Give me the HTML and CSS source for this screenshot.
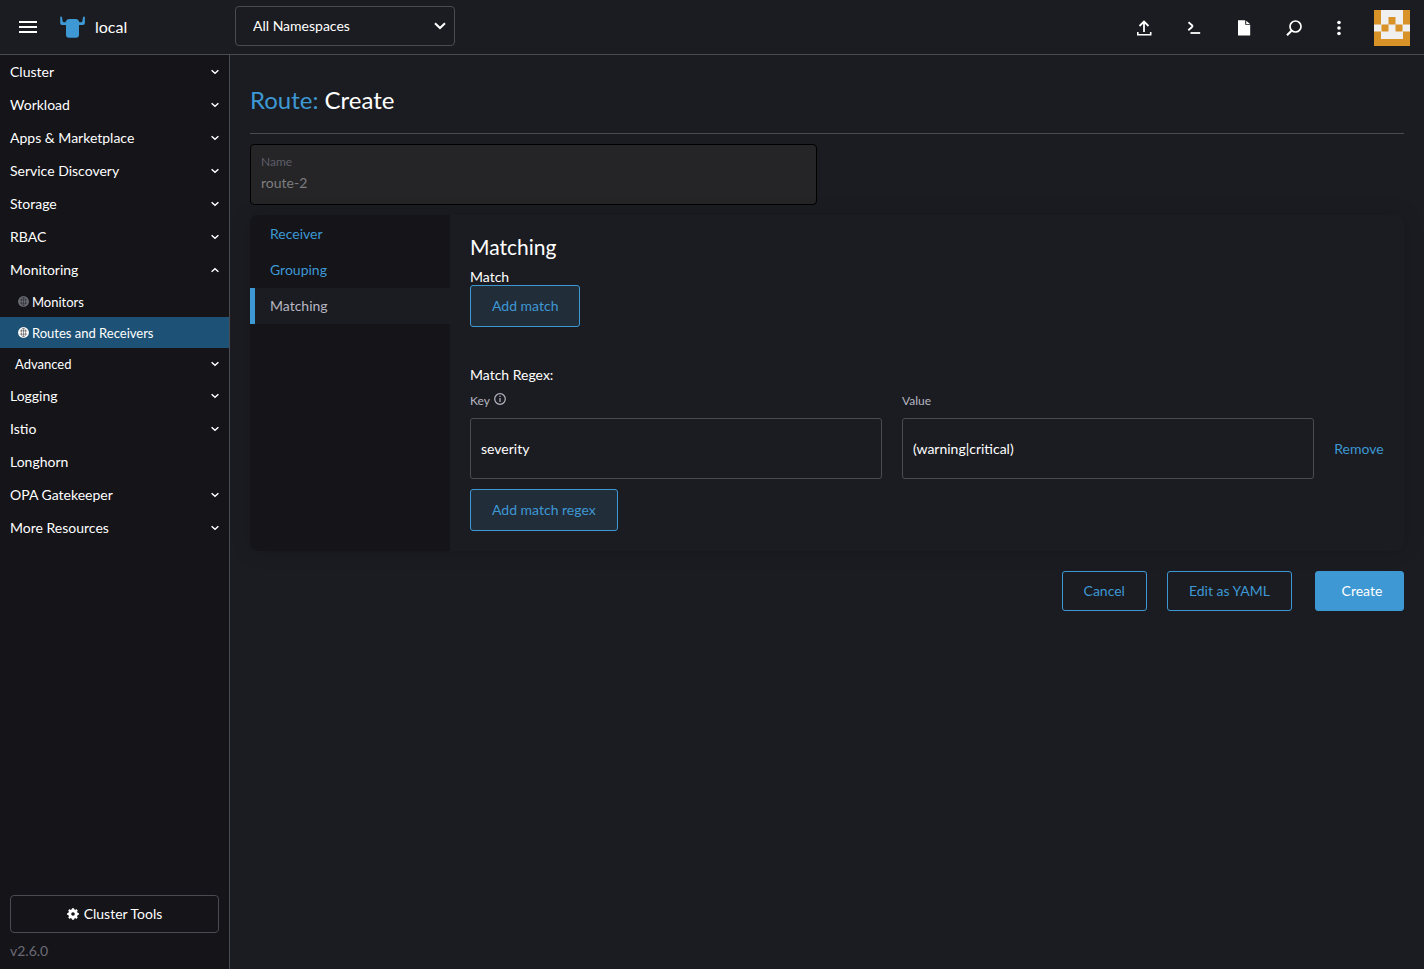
FILE: index.html
```html
<!DOCTYPE html>
<html lang="en">
<head>
<meta charset="utf-8">
<title>Route: Create</title>
<link rel="stylesheet" href="styles.css">
</head>
<body>
<svg class="defs" aria-hidden="true">
  <symbol id="chevron" viewBox="0 0 8 6"><path d="M.6 1.200 4 4.200 7.400 1.200" fill="none" stroke="currentColor" stroke-width="1.500"/></symbol>
  <symbol id="globe" viewBox="0 0 12 12"><circle cx="6" cy="6" r="5.900" fill="currentColor"/><g fill="none" stroke="#141419" stroke-opacity=".7" stroke-width=".7"><path d="M6 1.500v9M2 4.200h8M2 7.800h8"/><ellipse cx="6" cy="6" rx="2.400" ry="4.600"/></g></symbol>
</svg>
<div class="app">
  <header class="topbar">
    <div class="brand">
      <button class="icon-btn menu" aria-label="Menu"><svg width="18" height="12" viewBox="0 0 18 12"><path d="M0 1h18M0 6h18M0 11h18" stroke="currentColor" stroke-width="2"/></svg></button>
      <svg class="logo" width="26" height="22" viewBox="0 0 26 22"><path fill="#3d98d3" d="M1.200.5C.5.5.2 1 .2 1.700V7Q.2 9 2 9H6V18.500Q6 21.800 9 21.800H16Q19 21.800 19 18.500V9H23Q24.900 9 24.900 7V1.700C24.900 1 24.600.5 23.900.5 22.900.5 22.900 2 22.600 4 22.400 6 21.800 6.300 19.800 6.300 19 6.300 18.800 3 16 3H9C6.200 3 6 6.300 5.200 6.300 3.200 6.300 2.600 6 2.400 4 2.200 2 2.200.5 1.200.5Z"/></svg>
      <span class="cluster-name">local</span>
    </div>
    <div class="namespace">
      <select aria-label="Namespaces"><option>All Namespaces</option></select>
      <svg class="select-arrow" width="12" height="8" viewBox="0 0 12 8"><path d="M1 1.200 6 6 11 1.200" fill="none" stroke="currentColor" stroke-width="2"/></svg>
    </div>
    <div class="actions">
      <button class="icon-btn" aria-label="Import YAML"><svg width="16" height="16" viewBox="0 0 16 16" fill="none" stroke="currentColor" stroke-width="1.800"><path d="M8 12V1.800M3.500 6 8 1.500l4.500 4.500"/><path d="M1.800 12v2.800h12.900V12" stroke-width="1.600"/></svg></button>
      <button class="icon-btn" aria-label="Kubectl Shell"><svg width="16" height="16" viewBox="0 0 16 16" fill="none" stroke="currentColor" stroke-width="1.800"><path d="M2.500 2.300 6 5.200q1 .9 0 1.800L2.300 10.200"/><path d="M4.500 13h9.700"/></svg></button>
      <button class="icon-btn" aria-label="Download KubeConfig"><svg width="16" height="16" viewBox="0 0 16 16"><path fill="currentColor" d="M2 .2h7.200v4.600h5V15q0 .5-.5.5H2.500Q2 15.500 2 15ZM10.200.7 14 4H10.200Z"/></svg></button>
      <button class="icon-btn" aria-label="Search"><svg width="18" height="18" viewBox="0 0 18 18" fill="none" stroke="currentColor"><circle cx="10.500" cy="7.500" r="5.500" stroke-width="1.700"/><path d="M6.500 11.800 2 16.300" stroke-width="2.200"/></svg></button>
      <button class="icon-btn kebab" aria-label="More"><svg width="4" height="16" viewBox="0 0 4 16" fill="currentColor"><circle cx="2" cy="2.500" r="1.800"/><circle cx="2" cy="8" r="1.800"/><circle cx="2" cy="13.500" r="1.800"/></svg></button>
      <button class="icon-btn avatar" aria-label="User"><svg width="36" height="36" viewBox="0 0 36 36"><path fill="#d89227" d="M0 0h36v36H0z"/><path fill="#f0f0f0" d="M7 0h22v29H7zM0 14.500h36v7H0z"/><path fill="#d89227" d="M14.500 7h7v7.500h-7zM7.500 14.500h7v7h-7zM21.500 14.500h7v7h-7z"/></svg></button>
    </div>
  </header>

  <nav class="sidebar">
    <ul class="nav-list">
      <li><a class="nav-item" href="#">Cluster<svg class="chev"><use href="#chevron"/></svg></a></li>
      <li><a class="nav-item" href="#">Workload<svg class="chev"><use href="#chevron"/></svg></a></li>
      <li><a class="nav-item" href="#">Apps &amp; Marketplace<svg class="chev"><use href="#chevron"/></svg></a></li>
      <li><a class="nav-item" href="#">Service Discovery<svg class="chev"><use href="#chevron"/></svg></a></li>
      <li><a class="nav-item" href="#">Storage<svg class="chev"><use href="#chevron"/></svg></a></li>
      <li><a class="nav-item" href="#">RBAC<svg class="chev"><use href="#chevron"/></svg></a></li>
      <li><a class="nav-item" href="#">Monitoring<svg class="chev up"><use href="#chevron"/></svg></a>
        <ul class="nav-list">
          <li><a class="nav-item child" href="#"><svg class="globe"><use href="#globe"/></svg>Monitors</a></li>
          <li><a class="nav-item child active" href="#"><svg class="globe"><use href="#globe"/></svg>Routes and Receivers</a></li>
          <li><a class="nav-item subgroup" href="#">Advanced<svg class="chev"><use href="#chevron"/></svg></a></li>
        </ul>
      </li>
      <li><a class="nav-item" href="#">Logging<svg class="chev"><use href="#chevron"/></svg></a></li>
      <li><a class="nav-item" href="#">Istio<svg class="chev"><use href="#chevron"/></svg></a></li>
      <li><a class="nav-item" href="#">Longhorn</a></li>
      <li><a class="nav-item" href="#">OPA Gatekeeper<svg class="chev"><use href="#chevron"/></svg></a></li>
      <li><a class="nav-item" href="#">More Resources<svg class="chev"><use href="#chevron"/></svg></a></li>
    </ul>
    <div class="nav-footer">
      <button class="tools"><svg width="12" height="12" viewBox="0 0 12 12"><circle cx="6" cy="6" r="3.300" fill="none" stroke="currentColor" stroke-width="3"/><path d="M6 .2v2.300M6 9.500v2.300M.2 6h2.300M9.500 6h2.300M1.900 1.900l1.600 1.600M8.500 8.500l1.600 1.600M1.900 10.100l1.600-1.600M8.500 3.500l1.600-1.600" stroke="currentColor" stroke-width="2.200"/></svg>Cluster Tools</button>
      <div class="version">v2.6.0</div>
    </div>
  </nav>

  <main class="main">
    <h1 class="title"><a href="#">Route:</a> Create</h1>
    <div class="name-field">
      <label for="name">Name</label>
      <input id="name" type="text" value="route-2" disabled>
    </div>
    <section class="tabbed">
      <div class="tabs">
        <a class="tab" href="#">Receiver</a>
        <a class="tab" href="#">Grouping</a>
        <a class="tab selected" href="#">Matching</a>
      </div>
      <div class="panel">
        <h2>Matching</h2>
        <h3>Match</h3>
        <button class="btn tint">Add match</button>
        <h3 class="regex-title">Match Regex:</h3>
        <div class="pair">
          <div class="field">
            <label for="key">Key <svg width="12" height="16" viewBox="0 0 12 16" fill="none" stroke="currentColor"><circle cx="6" cy="6" r="5.300" stroke-width="1.200"/><path d="M6 2.800v1.200M6 5v4" stroke-width="1.200"/></svg></label>
            <input id="key" type="text" value="severity">
          </div>
          <div class="field">
            <label for="value">Value</label>
            <input id="value" type="text" value="(warning|critical)">
          </div>
          <button class="remove">Remove</button>
        </div>
        <button class="btn tint">Add match regex</button>
      </div>
    </section>
    <div class="form-actions">
      <button class="btn">Cancel</button>
      <button class="btn">Edit as YAML</button>
      <button class="btn primary">Create</button>
    </div>
  </main>
</div>
</body>
</html>
```

FILE: styles.css
```css
:root {
  --bg: #1b1c21;
  --nav: #141419;
  --border: #4a4b52;
  --primary: #3d98d3;
  --text: #fff;
}

* { box-sizing: border-box; }

body {
  margin: 0;
  background: var(--bg);
  color: var(--text);
  font: 14px/20px Lato, "Liberation Sans", sans-serif;
}

a { color: var(--primary); text-decoration: none; }
h1, h2, h3 { margin: 0; font-weight: 400; }
button, input, select { font: inherit; color: inherit; }
button { cursor: pointer; }
svg { flex: none; }
.defs { display: none; }

.app {
  display: grid;
  grid-template: 55px 1fr / 230px minmax(0, 1fr);
  min-height: 100vh;
}

.topbar {
  grid-column: 1 / -1;
  display: flex;
  align-items: center;
  border-bottom: 1px solid var(--border);
}

.brand {
  display: flex;
  align-items: center;
  width: 235px;
  padding-left: 19px;
}

.icon-btn {
  display: flex;
  align-items: center;
  justify-content: center;
  padding: 0;
  border: 0;
  background: none;
}

.logo { margin: 0 9px 0 23px; }
.cluster-name { font-size: 16px; }

.namespace { position: relative; width: 220px; margin-bottom: 2px; }

.namespace select {
  appearance: none;
  width: 100%;
  height: 40px;
  padding: 0 17px;
  border: 1px solid var(--border);
  border-radius: 4px;
  background: transparent;
}

.select-arrow {
  position: absolute;
  top: 16px;
  right: 9px;
  pointer-events: none;
}

.actions {
  display: flex;
  align-items: center;
  margin-left: auto;
  padding: 2px 14px 0 0;
}

.actions .icon-btn { width: 50px; height: 40px; }
.actions .kebab { width: 40px; }
.actions .avatar { width: 36px; margin-left: 15px; }

.sidebar {
  display: flex;
  flex-direction: column;
  border-right: 1px solid var(--border);
  background: var(--nav);
}

.nav-list { margin: 0; padding: 0; list-style: none; }

.nav-item {
  display: flex;
  align-items: center;
  height: 33px;
  padding: 0 10px;
  color: var(--text);
}

.chev { width: 8px; height: 6px; margin-left: auto; }
.chev.up { transform: rotate(180deg); }

.nav-item.child, .nav-item.subgroup { height: 31px; font-size: 13px; }
.nav-item.child { padding-left: 18px; gap: 3px; }
.nav-item.subgroup { padding-left: 15px; }
.nav-item.active { background: #1d5276; }
.globe { width: 11px; height: 11px; color: #6c6c76; }
.active .globe { color: var(--text); }

.nav-footer { margin-top: auto; padding: 0 10px 8px; }

.tools {
  display: flex;
  align-items: center;
  justify-content: center;
  gap: 5px;
  width: 100%;
  height: 38px;
  border: 1px solid var(--border);
  border-radius: 4px;
  background: transparent;
}

.version { margin-top: 8px; color: #6c6c76; }

.main { padding: 20px; }

.title {
  padding: 9px 0 18px;
  border-bottom: 1px solid var(--border);
  font-size: 24px;
  line-height: 31px;
}

.name-field {
  width: calc(50% - 10px);
  margin: 10px 0;
  padding: 8px 10px 10px;
  border: 1px solid #000;
  border-radius: 4px;
  background: #252527;
  color: #7e7e80;
}

.name-field label {
  display: block;
  font-size: 12px;
  line-height: 18px;
  color: #5e5e69;
}

.name-field input {
  display: block;
  width: 100%;
  height: 23px;
  padding: 0;
  border: 0;
  background: none;
}

.tabbed {
  display: grid;
  grid-template-columns: 200px minmax(0, 1fr);
  border-radius: 8px;
  box-shadow: 0 0 20px rgba(0, 0, 0, 0.16);
}

.tabs { padding-top: 1px; border-radius: 8px 0 0 8px; background: var(--nav); }

.tab {
  display: block;
  padding: 8px 15px;
  border-left: 5px solid transparent;
}

.tab.selected {
  border-left-color: var(--primary);
  background: var(--bg);
  color: #b6b6c2;
}

.panel { padding: 19px 20px 20px; }
.panel h2 { margin-bottom: 8px; font-size: 21px; line-height: 26px; }
.panel h3 { font-size: 14px; line-height: 17px; }
.panel .regex-title { margin: 39px 0 9px; }

.btn {
  display: block;
  height: 40px;
  padding: 0 21px;
  border: 1px solid var(--primary);
  border-radius: 3px;
  background: transparent;
  color: var(--primary);
}

.btn.tint { height: 42px; background: #222d3a; }

.btn.primary {
  margin-left: 3px;
  padding: 0 20px 0 25px;
  min-width: 89px;
  background: var(--primary);
  color: var(--text);
}

.pair {
  display: grid;
  grid-template-columns: minmax(0, 1fr) minmax(0, 1fr) 50px;
  column-gap: 20px;
  margin-bottom: 10px;
}

.field label {
  display: flex;
  align-items: center;
  gap: 4px;
  height: 18px;
  margin-bottom: 8px;
  font-size: 12px;
  color: #b6b6c2;
}

.field input {
  display: block;
  width: 100%;
  height: 61px;
  padding: 0 10px;
  border: 1px solid var(--border);
  border-radius: 3px;
  background: transparent;
}

.remove {
  align-self: end;
  height: 61px;
  padding: 0;
  border: 0;
  background: none;
  color: var(--primary);
}

.form-actions {
  display: flex;
  justify-content: flex-end;
  gap: 20px;
  margin-top: 20px;
}
```
